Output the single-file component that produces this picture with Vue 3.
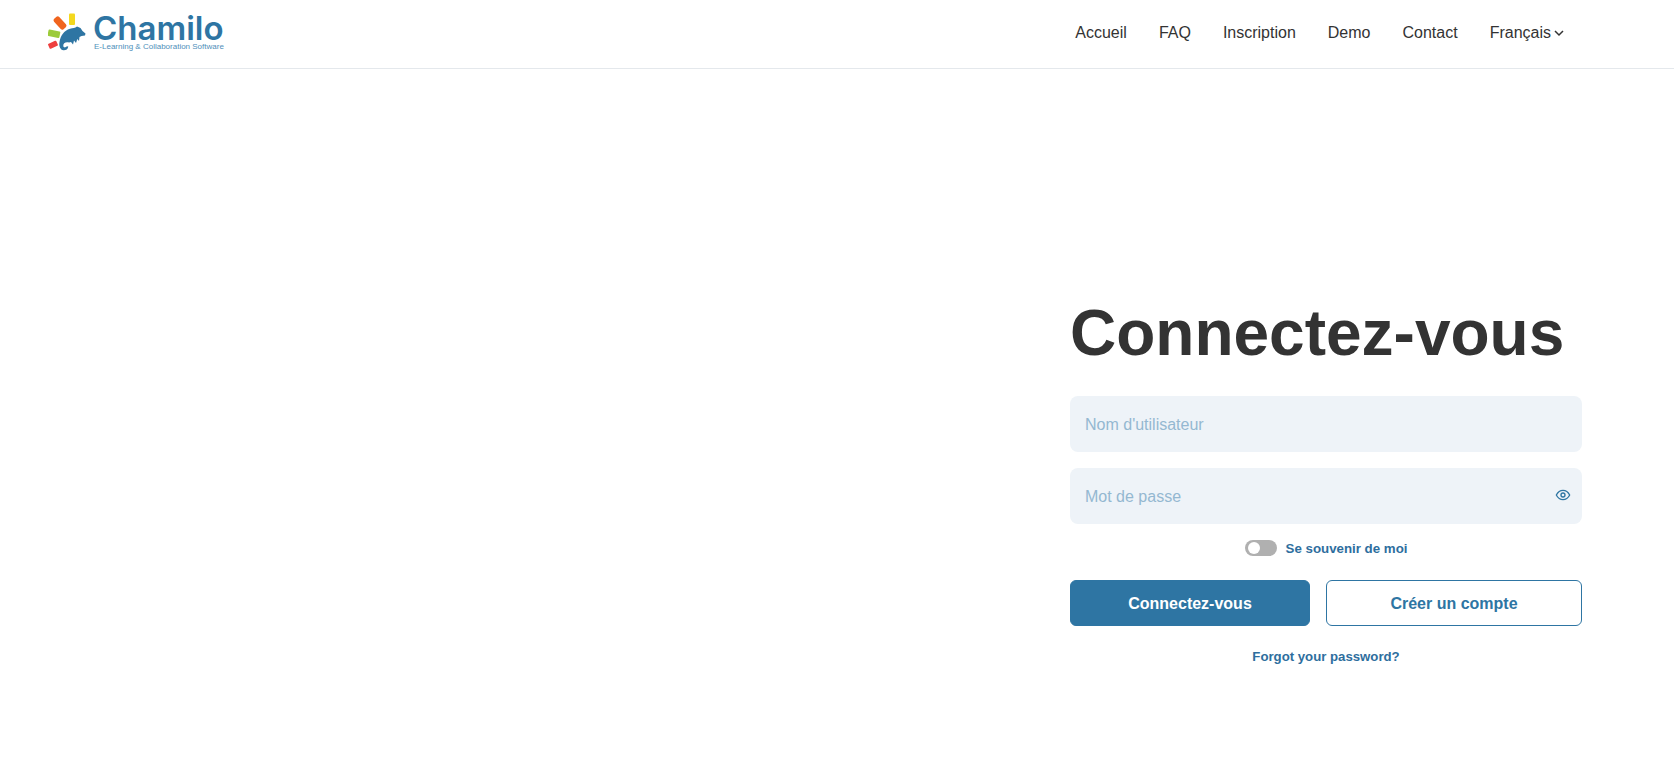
<script setup>
const links = ['Accueil', 'FAQ', 'Inscription', 'Demo', 'Contact']
</script>

<template>
  <div class="page">
    <header class="bar">
      <a class="logo">
        <svg class="mark" width="38" height="40" viewBox="48 12 38 40">
          <rect x="69" y="13.500" width="6" height="11.500" rx="1" fill="#f4d81e" />
          <rect x="56.500" y="16" width="7" height="14" rx="2" fill="#f0641e" transform="rotate(-42 60 23)" />
          <rect x="48" y="30.500" width="12" height="6.500" rx="1" fill="#9ccb3a" transform="rotate(12 54 33.500)" />
          <rect x="48.500" y="42" width="9" height="5.500" rx="1" fill="#ee3f3f" transform="rotate(-24 53 44.800)" />
          <path d="M77 26.500L80.500 28L82.500 31L85.500 33.500L85 35.500L81.500 36L79.500 37L79 41L77.300 39L76 43L74 40.500L73 44.500L71 42L69 42.500C65.500 41.500 63 43.500 63.300 46C63.500 47.800 66 48 66.700 46.300L68.300 46.500C68 49.500 65.500 50.500 63.500 50.300C60.200 50 58.700 46 59.500 42C60.500 36 64 30.500 70 28.800C73 28 75 28 77 26.500Z" fill="#2e75a3" />
        </svg>
        <span class="brand">
          <span class="name">Chamilo</span>
          <span class="tag">E-Learning &amp; Collaboration Software</span>
        </span>
      </a>
      <nav class="nav">
        <a v-for="l in links" :key="l">{{ l }}</a>
        <a class="lang">Français
          <svg width="10" height="10" viewBox="0 0 10 10"><path d="M1 3l4 4 4-4" fill="none" stroke="#333" stroke-width="1.500" /></svg>
        </a>
      </nav>
    </header>
    <main class="main">
      <form class="form" @submit.prevent>
        <h1>Connectez-vous</h1>
        <div class="field"><input placeholder="Nom d'utilisateur" /></div>
        <div class="field">
          <input type="password" placeholder="Mot de passe" />
          <svg class="eye" width="16" height="16" viewBox="0 0 24 24" fill="none" stroke="#2e75a3" stroke-width="2">
            <path d="M2 12s3.600-7 10-7 10 7 10 7-3.600 7-10 7-10-7-10-7z" />
            <circle cx="12" cy="12" r="3" />
          </svg>
        </div>
        <div class="remember">
          <span class="switch"><i></i></span>
          <span>Se souvenir de moi</span>
        </div>
        <div class="actions">
          <button class="primary">Connectez-vous</button>
          <button class="secondary">Créer un compte</button>
        </div>
        <a class="forgot">Forgot your password?</a>
      </form>
    </main>
  </div>
</template>

<style>
body { background: #fff; }
</style>

<style scoped>
.page { font-family: "Liberation Sans", Arial, sans-serif; height: 760px; overflow: hidden; color: #333; }
.bar { box-sizing: border-box; height: 69px; border-bottom: 1px solid #e4e8ec; display: flex; align-items: center; justify-content: space-between; padding: 0 110px 0 48px; }
.logo { display: flex; align-items: flex-start; gap: 7px; height: 40px; margin-top: -4px; }
.mark { display: block; }
.brand { display: flex; flex-direction: column; align-items: flex-start; padding-top: 2px; }
.name { font-family: Inter, sans-serif; font-weight: 600; font-size: 33px; line-height: 28px; color: #2e75a3; }
.tag { font-size: 8px; line-height: 9px; margin-left: 1px; color: #4f8fba; white-space: nowrap; }
.nav { display: flex; gap: 32px; font-size: 16px; padding-bottom: 2px; }
.lang { display: flex; align-items: center; gap: 3px; }
.main { display: flex; justify-content: flex-end; padding: 0 92px 0 0; }
.form { width: 512px; padding-top: 224px; }
h1 { margin: 0 0 23px; font-size: 64px; line-height: 80px; font-weight: 700; color: #333; white-space: nowrap; }
.field { position: relative; margin-bottom: 16px; }
input { display: block; box-sizing: border-box; width: 100%; height: 56px; border: 0; outline: 0; border-radius: 8px; background: #eef3f8; padding: 2px 15px 0; font: 16px "Liberation Sans", Arial, sans-serif; color: #333; }
input::placeholder { color: #94b8d1; opacity: 1; }
.eye { position: absolute; right: 11px; top: 19px; }
.remember { display: flex; justify-content: center; align-items: center; gap: 9px; height: 16px; font-size: 13.300px; font-weight: 700; color: #2e6e9e; }
.switch { width: 32px; height: 16px; border-radius: 8px; background: #b0b0b0; position: relative; }
.switch i { position: absolute; left: 3px; top: 2px; width: 12px; height: 12px; border-radius: 50%; background: #fff; }
.actions { display: grid; grid-template-columns: 240px 256px; gap: 16px; margin-top: 24px; }
button { height: 46px; border-radius: 6px; padding: 2px 0 0; font: 700 16px "Liberation Sans", Arial, sans-serif; box-sizing: border-box; }
.primary { background: #2e75a3; color: #fff; border: 1px solid #2e75a3; }
.secondary { background: #fff; color: #2e75a3; border: 1px solid #2e75a3; }
.forgot { display: block; text-align: center; margin-top: 23px; font-size: 13.200px; font-weight: 700; color: #2e6e9e; }
</style>
